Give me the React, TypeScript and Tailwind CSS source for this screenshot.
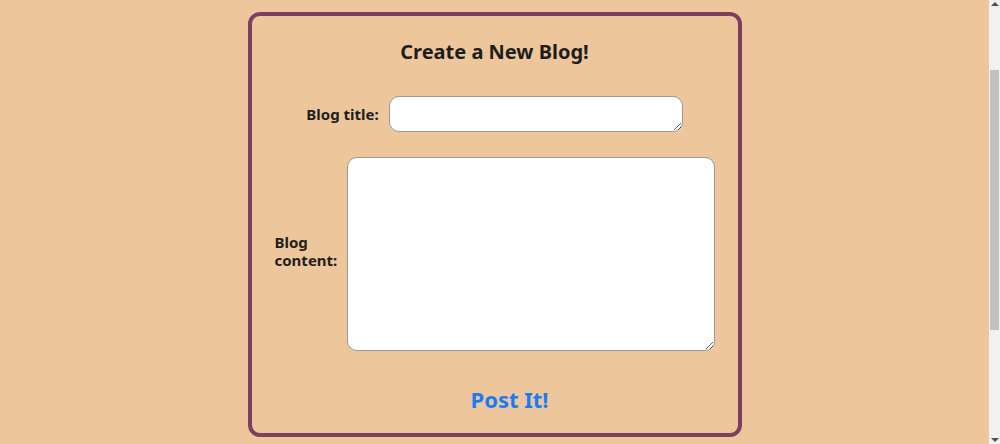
const font = { fontFamily: '"Noto Sans", "Open Sans", sans-serif' };

function Scrollbar() {
  return (
    <div className="flex w-[11px] flex-col items-center bg-[#f1f1f1]">
      <div className="mt-[2px] h-0 w-0 border-x-[4px] border-b-[4px] border-x-transparent border-b-[#505050]" />
      <div className="mt-[64px] h-[260px] w-[9px] bg-[#c1c1c1]" />
      <div className="mt-auto mb-[2px] h-0 w-0 border-x-[4px] border-t-[4px] border-x-transparent border-t-[#505050]" />
    </div>
  );
}

export default function App() {
  return (
    <div className="flex h-[444px] overflow-hidden bg-[#edc69c] text-[#1e1e1e]" style={font}>
      <main className="flex-1 pt-[12px]">
        <div className="mx-auto w-[494px] rounded-xl border-4 border-[#7b3f5f] px-6 pt-[22px] pb-[19px]">
          <h1 className="text-center text-[20px] font-bold leading-[27px]">Create a New Blog!</h1>

          <form className="mt-[31px] flex flex-col items-center">
            <div className="flex items-center gap-[10px]">
              <label className="text-[15px] font-bold">Blog title:</label>
              <textarea className="block h-[36px] w-[294px] rounded-[10px] border border-[#9a9a9a] bg-white" />
            </div>

            <div className="mt-[25px] flex items-center gap-[10px]">
              <label className="mb-[6px] w-[62px] text-[15px] font-bold leading-[18px]">Blog content:</label>
              <textarea className="block h-[194px] w-[368px] rounded-[10px] border border-[#9a9a9a] bg-white" />
            </div>

            <button type="button" className="mt-[33px] pl-[30px] text-[22px] font-bold leading-[30px] text-[#1a7cf5]">
              Post It!
            </button>
          </form>
        </div>
      </main>
      <Scrollbar />
    </div>
  );
}
